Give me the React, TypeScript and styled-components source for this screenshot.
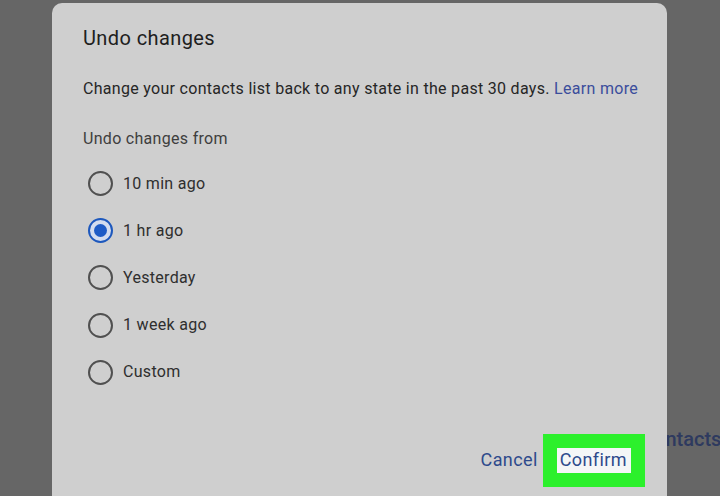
import styled, { createGlobalStyle } from "styled-components";

const GlobalStyle = createGlobalStyle`
  html, body {
    margin: 0;
    padding: 0;
    background: #666666;
  }
  body {
    font-family: Roboto, "Liberation Sans", Arial, sans-serif;
    overflow: hidden;
  }
`;

const Page = styled.div`
  position: relative;
  width: 720px;
  height: 496px;
  background: #666666;
  overflow: hidden;
`;

const Behind = styled.div`
  padding: 427px 0 0 641px;
  white-space: nowrap;
`;

const BehindLink = styled.span`
  font-size: 20px;
  line-height: 24px;
  font-weight: 500;
  color: #2e3a5f;
`;

const Dialog = styled.div`
  position: absolute;
  top: 3px;
  left: 52px;
  width: 615px;
  height: 505px;
  box-sizing: border-box;
  padding: 23px 22px 0 31px;
  background: #cfcfcf;
  border-radius: 10px;
  display: flex;
  flex-direction: column;
`;

const Title = styled.h2`
  margin: 0;
  font-size: 20px;
  line-height: 24px;
  font-weight: 400;
  letter-spacing: 0.4px;
  color: #202020;
`;

const Description = styled.p`
  margin: 29px 0 0;
  font-size: 16px;
  line-height: 20px;
  letter-spacing: 0.3px;
  color: #262626;
  white-space: nowrap;
`;

const Link = styled.span`
  color: #3b4d9c;
`;

const SectionLabel = styled.div`
  margin-top: 30px;
  font-size: 16px;
  line-height: 20px;
  letter-spacing: 0.3px;
  color: #3e3e3e;
`;

const OptionList = styled.div`
  margin-top: 11px;
  display: flex;
  flex-direction: column;
`;

const Option = styled.label`
  height: 47.2px;
  display: flex;
  align-items: center;
  padding-left: 5px;
  gap: 10px;
`;

const Radio = styled.span<{ $checked?: boolean }>`
  position: relative;
  width: 25px;
  height: 25px;
  box-sizing: border-box;
  border-radius: 50%;
  border: 2.6px solid ${(p) => (p.$checked ? "#1d58bd" : "#505050")};
  background: ${(p) => (p.$checked ? "#d3ddef" : "transparent")};
  flex-shrink: 0;

  &::after {
    content: "";
    display: ${(p) => (p.$checked ? "block" : "none")};
    position: absolute;
    left: 50%;
    top: 50%;
    width: 13px;
    height: 13px;
    margin: -6.5px 0 0 -6.5px;
    border-radius: 50%;
    background: #1e5cc6;
  }
`;

const OptionText = styled.span`
  font-size: 16px;
  line-height: 20px;
  letter-spacing: 0.3px;
  color: #2e2e2e;
`;

const Footer = styled.div`
  margin-top: 38px;
  display: flex;
  justify-content: flex-end;
  align-items: center;
  gap: 5px;
`;

const TextButton = styled.button`
  border: none;
  background: transparent;
  padding: 0;
  font-family: inherit;
  font-size: 18px;
  line-height: 22px;
  font-weight: 400;
  letter-spacing: 0.4px;
  color: #2d4a8c;
  cursor: pointer;
`;

const Highlight = styled.span`
  display: flex;
  padding: 14px 14px 14px 14px;
  background: #2cf02c;
`;

const ConfirmButton = styled(TextButton)`
  background: #f4f6f7;
  padding: 1px 4px 2px 3px;
`;

const options = [
  { label: "10 min ago", checked: false },
  { label: "1 hr ago", checked: true },
  { label: "Yesterday", checked: false },
  { label: "1 week ago", checked: false },
  { label: "Custom", checked: false },
];

function App() {
  return (
    <>
      <GlobalStyle />
      <Page>
        <Behind>
          <BehindLink>Contacts</BehindLink>
        </Behind>
        <Dialog>
          <Title>Undo changes</Title>
          <Description>
            Change your contacts list back to any state in the past 30 days.{" "}
            <Link>Learn more</Link>
          </Description>
          <SectionLabel>Undo changes from</SectionLabel>
          <OptionList>
            {options.map((o) => (
              <Option key={o.label}>
                <Radio $checked={o.checked} />
                <OptionText>{o.label}</OptionText>
              </Option>
            ))}
          </OptionList>
          <Footer>
            <TextButton>Cancel</TextButton>
            <Highlight>
              <ConfirmButton>Confirm</ConfirmButton>
            </Highlight>
          </Footer>
        </Dialog>
      </Page>
    </>
  );
}

export default App;
